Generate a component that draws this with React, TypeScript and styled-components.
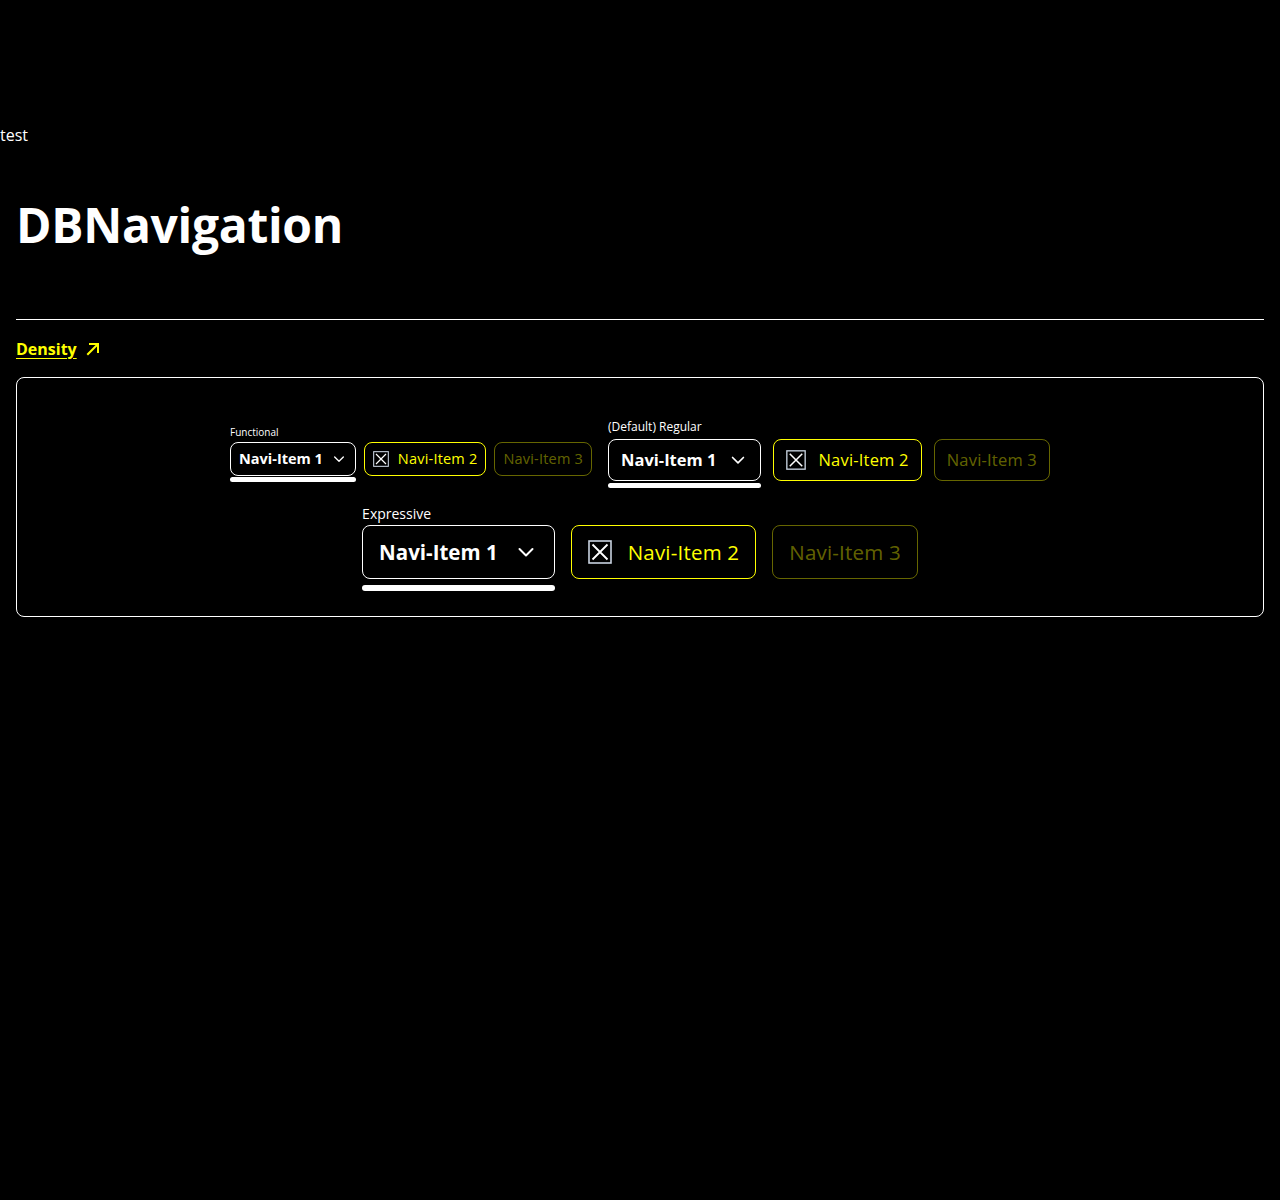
import React from 'react';
import styled, { createGlobalStyle } from 'styled-components';

type Density = 'functional' | 'regular' | 'expressive';

type DensitySpec = {
  label: string;
  labelSize: number;
  labelLine: number;
  labelGap: number;
  font: number;
  line: number;
  padY: number;
  padX: number;
  gap: number;
  icon: number;
  itemGap: number;
  barGap: number;
  bar: number;
};

const specs: Record<Density, DensitySpec> = {
  functional: {
    label: 'Functional',
    labelSize: 10,
    labelLine: 14,
    labelGap: 3,
    font: 14.5,
    line: 20,
    padY: 6,
    padX: 8,
    gap: 8,
    icon: 16,
    itemGap: 8,
    barGap: 1,
    bar: 5,
  },
  regular: {
    label: '(Default) Regular',
    labelSize: 12,
    labelLine: 16,
    labelGap: 4,
    font: 16.5,
    line: 24,
    padY: 8,
    padX: 12,
    gap: 12,
    icon: 20,
    itemGap: 12,
    barGap: 2,
    bar: 5,
  },
  expressive: {
    label: 'Expressive',
    labelSize: 14,
    labelLine: 18,
    labelGap: 2,
    font: 20.5,
    line: 28,
    padY: 12,
    padX: 16,
    gap: 16,
    icon: 24,
    itemGap: 16,
    barGap: 6,
    bar: 6,
  },
};

const YELLOW = '#ffff00';
const DIM = 'rgba(255, 255, 0, 0.4)';

const GlobalStyle = createGlobalStyle`
  html, body {
    margin: 0;
    background: #000;
    color: #fff;
    font-family: "Open Sans", "Noto Sans", sans-serif;
  }
  * { box-sizing: border-box; }
`;

const TopNote = styled.div`
  padding-top: 123px;
  font-size: 16px;
  line-height: 24px;
`;

const Main = styled.main`
  padding: 0 16px;
`;

const Title = styled.h1`
  margin: 48px 0 0;
  font-size: 48px;
  line-height: 60px;
  font-weight: 700;
  letter-spacing: -0.3px;
`;

const Divider = styled.hr`
  margin: 64px 0 0;
  border: 0;
  border-top: 1px solid #fff;
`;

const DensityLink = styled.a`
  display: inline-flex;
  align-items: center;
  gap: 8px;
  margin-top: 17px;
  color: ${YELLOW};
  font-size: 16px;
  line-height: 24px;
  font-weight: 700;
  text-decoration: underline;
  text-underline-offset: 3px;

  svg {
    display: block;
  }
`;

const Card = styled.section`
  margin-top: 16px;
  border: 1px solid #fff;
  border-radius: 8px;
  padding: 41px 24px 25px;
  display: flex;
  flex-wrap: wrap;
  justify-content: center;
  align-items: center;
  gap: 17px 16px;
`;

const Group = styled.div`
  display: flex;
  flex-direction: column;
`;

const GroupLabel = styled.span<{ $size: number; $line: number; $gap: number }>`
  font-size: ${(p) => p.$size}px;
  line-height: ${(p) => p.$line}px;
  margin-bottom: ${(p) => p.$gap}px;
`;

const ItemRow = styled.div<{ $gap: number }>`
  display: flex;
  align-items: flex-start;
  gap: ${(p) => p.$gap}px;
`;

const ItemWrap = styled.div`
  display: flex;
  flex-direction: column;
`;

const NavButton = styled.button<{ $s: DensitySpec; $tone: 'active' | 'normal' | 'disabled' }>`
  display: inline-flex;
  align-items: center;
  gap: ${(p) => (p.$tone === 'normal' && p.$s.gap === 8 ? 9 : p.$s.gap)}px;
  margin: 0;
  padding: ${(p) => `${p.$s.padY}px ${p.$s.padX}px`};
  background: transparent;
  border: 1px solid
    ${(p) => (p.$tone === 'active' ? '#fff' : p.$tone === 'normal' ? YELLOW : DIM)};
  border-radius: 8px;
  color: ${(p) => (p.$tone === 'active' ? '#fff' : p.$tone === 'normal' ? YELLOW : DIM)};
  font-family: inherit;
  font-size: ${(p) => p.$s.font}px;
  line-height: ${(p) => p.$s.line}px;
  font-weight: ${(p) => (p.$tone === 'active' ? 700 : 400)};
  letter-spacing: ${(p) => (p.$tone === 'active' ? 0 : 0.2)}px;
  white-space: nowrap;
  cursor: pointer;

  svg {
    display: block;
    flex: none;
  }
`;

const ActiveBar = styled.span<{ $gap: number; $h: number }>`
  display: block;
  margin-top: ${(p) => p.$gap}px;
  height: ${(p) => p.$h}px;
  border-radius: 4px;
  background: #fff;
`;

function ChevronDown({ size }: { size: number }) {
  return (
    <svg width={size} height={size} viewBox="0 0 24 24" fill="none">
      <path
        d="M5.5 9L12 15.5L18.5 9"
        stroke="#fff"
        strokeWidth={2}
        strokeLinecap="round"
        strokeLinejoin="round"
      />
    </svg>
  );
}

function BoxX({ size }: { size: number }) {
  return (
    <svg width={size} height={size} viewBox="0 0 24 24" fill="none">
      <rect x="1" y="1" width="22" height="22" stroke="#c9d3e0" strokeWidth={1.6} />
      <path d="M4.5 4.5L19.5 19.5M19.5 4.5L4.5 19.5" stroke="#fff" strokeWidth={1.8} />
    </svg>
  );
}

function ArrowUpRight() {
  return (
    <svg width="16" height="16" viewBox="0 0 16 16" fill="none">
      <path
        d="M3 13L12.5 3.5M5 3H13V11"
        stroke={YELLOW}
        strokeWidth={2}
        strokeLinecap="square"
      />
    </svg>
  );
}

function Navigation({ density }: { density: Density }) {
  const s = specs[density];
  return (
    <Group>
      <GroupLabel $size={s.labelSize} $line={s.labelLine} $gap={s.labelGap}>
        {s.label}
      </GroupLabel>
      <ItemRow $gap={s.itemGap}>
        <ItemWrap>
          <NavButton $s={s} $tone="active" aria-expanded="false">
            Navi-Item 1
            <ChevronDown size={s.icon} />
          </NavButton>
          <ActiveBar $gap={s.barGap} $h={s.bar} />
        </ItemWrap>
        <NavButton $s={s} $tone="normal">
          <BoxX size={s.icon} />
          Navi-Item 2
        </NavButton>
        <NavButton $s={s} $tone="disabled" disabled>
          Navi-Item 3
        </NavButton>
      </ItemRow>
    </Group>
  );
}

export default function App() {
  return (
    <>
      <GlobalStyle />
      <TopNote>test</TopNote>
      <Main>
        <Title>DBNavigation</Title>
        <Divider />
        <DensityLink href="#density">
          Density
          <ArrowUpRight />
        </DensityLink>
        <Card>
          <Navigation density="functional" />
          <Navigation density="regular" />
          <Navigation density="expressive" />
        </Card>
      </Main>
    </>
  );
}
